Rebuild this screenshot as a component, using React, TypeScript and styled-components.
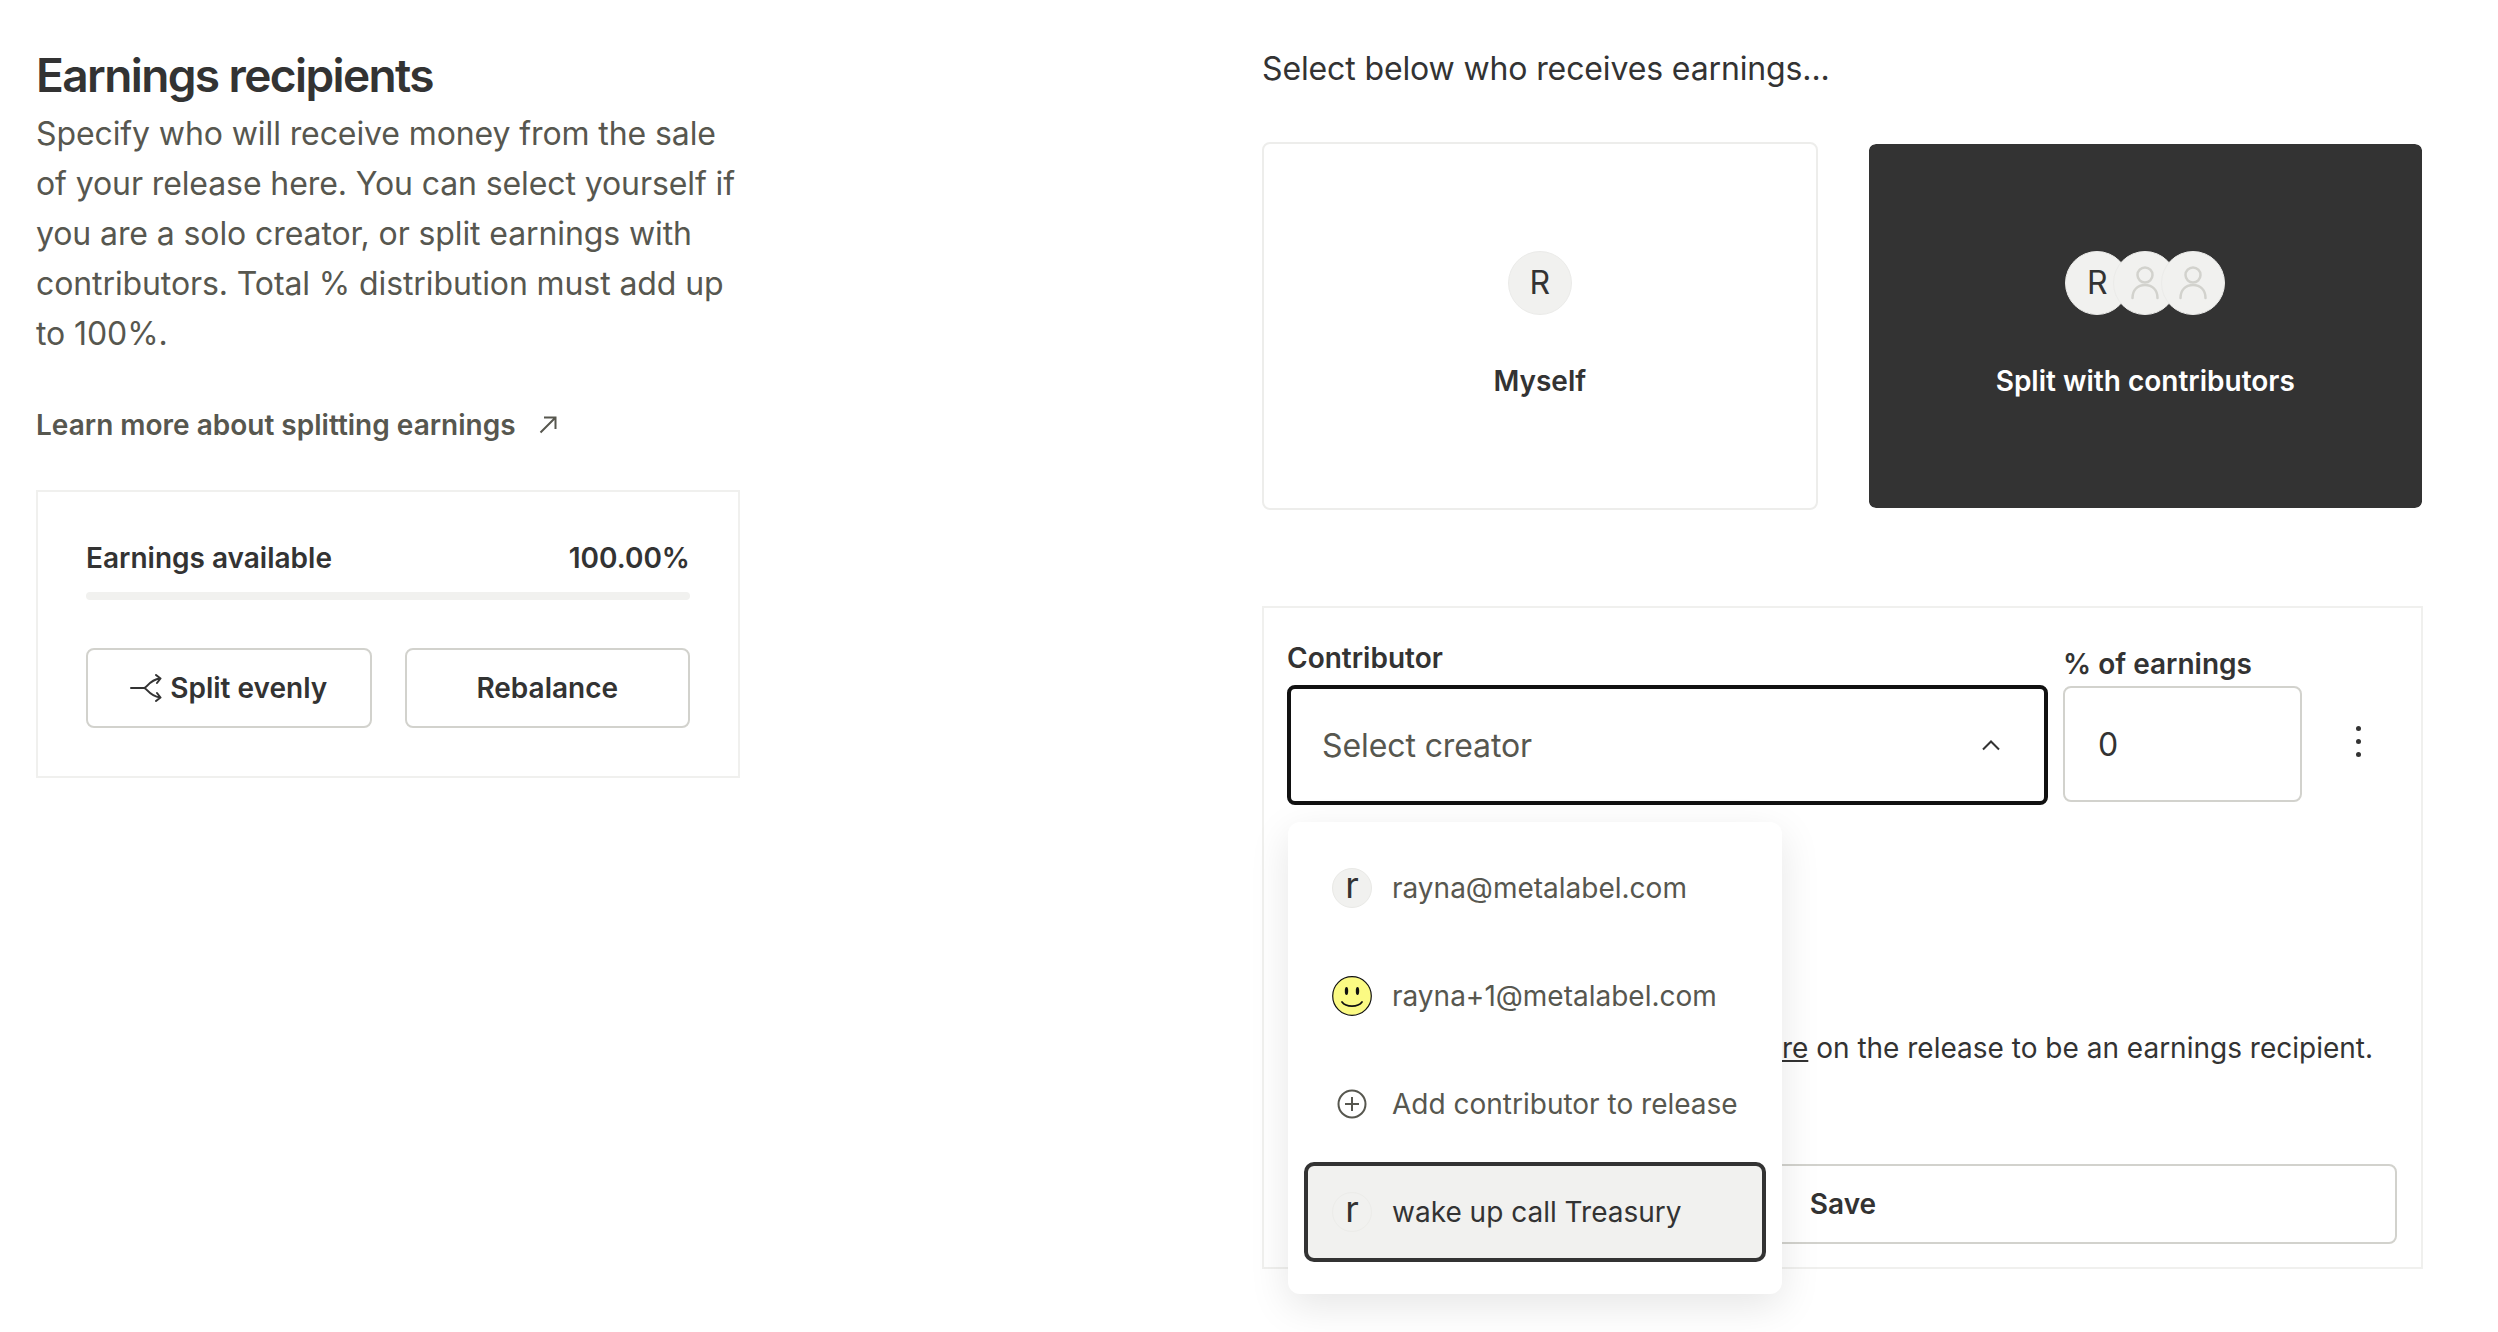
import React from 'react'
import styled, { createGlobalStyle } from 'styled-components'

const GlobalStyle = createGlobalStyle`
  html, body {
    margin: 0;
    padding: 0;
    background: #fff;
  }
  body {
    font-family: Inter, "Liberation Sans", sans-serif;
    color: #333;
  }
  * {
    box-sizing: border-box;
  }
`

const Page = styled.div`
  display: flex;
  width: 2498px;
  height: 1332px;
  overflow: hidden;
  padding-left: 36px;
`

const Intro = styled.section`
  width: 704px;
  margin-right: 522px;
  padding-top: 46px;
`

const Title = styled.h1`
  margin: 0 0 5px;
  font-size: 46px;
  line-height: 58px;
  font-weight: 600;
  letter-spacing: -1.6px;
  color: #333;
`

const Lead = styled.p`
  margin: 0;
  font-size: 32px;
  line-height: 50px;
  letter-spacing: -0.1px;
  color: #57574f;
`

const LearnLink = styled.a`
  display: flex;
  align-items: center;
  gap: 23px;
  margin-top: 44px;
  height: 44px;
  font-size: 28px;
  font-weight: 600;
  color: #57574f;
`

const SummaryCard = styled.div`
  margin-top: 43px;
  border: 2px solid #f0f0ee;
  padding: 46px 48px 48px;
`

const SummaryRow = styled.div`
  display: flex;
  justify-content: space-between;
  align-items: center;
  height: 40px;
  font-size: 28px;
  font-weight: 600;
`

const Track = styled.div`
  height: 8px;
  margin-top: 14px;
  border-radius: 4px;
  background: #f1f1ef;
`

const SummaryActions = styled.div`
  display: grid;
  grid-template-columns: 1fr 1fr;
  gap: 33px;
  margin-top: 48px;
`

const OutlineButton = styled.button`
  display: flex;
  align-items: center;
  justify-content: center;
  gap: 8px;
  width: 100%;
  height: 80px;
  border: 2px solid #d2d2cd;
  border-radius: 8px;
  background: #fff;
  font-family: inherit;
  font-size: 28px;
  font-weight: 600;
  color: #333;
  padding: 0;
`

const Editor = styled.section`
  width: 1161px;
  padding-top: 46px;
`

const Prompt = styled.p`
  margin: 0;
  font-size: 32px;
  line-height: 46px;
  letter-spacing: -0.13px;
  color: #333;
`

const Choices = styled.div`
  display: grid;
  grid-template-columns: 1fr 1fr;
  gap: 50px;
  margin-top: 50px;
`

const Choice = styled.div<{ $active?: boolean }>`
  display: flex;
  flex-direction: column;
  align-items: center;
  justify-content: center;
  gap: 46px;
  height: 368px;
  border-radius: 8px;
  border-style: solid;
  border-width: ${(p) => (p.$active ? '2px 1px' : '2px')};
  border-color: ${(p) => (p.$active ? '#fff' : '#ededeb')};
  background: ${(p) => (p.$active ? '#333' : '#fff')};
  background-clip: padding-box;
  color: ${(p) => (p.$active ? '#fff' : '#333')};
  font-size: 28px;
  line-height: 40px;
  font-weight: 600;
`

const AvatarStack = styled.div`
  display: flex;
`

const BigAvatar = styled.div`
  display: flex;
  align-items: center;
  justify-content: center;
  width: 64px;
  height: 64px;
  border-radius: 50%;
  background: #f1f1ef;
  border: 1px solid #ebebe9;
  color: #333;
  font-size: 32px;
  font-weight: 400;
  & + & {
    margin-left: -16px;
  }
`

const Panel = styled.div`
  position: relative;
  margin-top: 96px;
  height: 663px;
  border: 2px solid #f0f0ee;
  padding: 32px 24px 0 23px;
`

const FieldRow = styled.div`
  display: flex;
  align-items: flex-start;
`

const Field = styled.div<{ $width: number; $labelOffset?: number }>`
  width: ${(p) => p.$width}px;
  padding-top: ${(p) => p.$labelOffset || 0}px;
  margin-right: 15px;
`

const FieldLabel = styled.label<{ $gap: number }>`
  display: block;
  height: 36px;
  margin-bottom: ${(p) => p.$gap}px;
  font-size: 28px;
  line-height: 36px;
  font-weight: 600;
  color: #333;
`

const SelectBox = styled.div`
  display: flex;
  align-items: center;
  justify-content: space-between;
  height: 120px;
  padding: 0 43px 0 31px;
  border: 4px solid #111;
  border-radius: 8px;
  font-size: 32px;
  letter-spacing: -0.1px;
  color: #57574f;
`

const PercentInput = styled.div`
  display: flex;
  align-items: center;
  height: 116px;
  padding-left: 33px;
  border: 2px solid #d2d2cd;
  border-radius: 8px;
  font-size: 32px;
  color: #333;
`

const MenuDots = styled.div`
  display: flex;
  flex-direction: column;
  gap: 8px;
  margin: 86px 0 0 39px;
`

const Dot = styled.span`
  width: 5px;
  height: 5px;
  border-radius: 50%;
  background: #333;
`

const Hint = styled.p`
  margin: 221px 24px 0 0;
  text-align: right;
  font-size: 28px;
  line-height: 44px;
  color: #333;
  white-space: nowrap;
  a {
    color: inherit;
    text-decoration: underline;
  }
`

const SaveButton = styled(OutlineButton)`
  margin: 94px 0 0 2px;
  width: calc(100% - 2px);
`

const Dropdown = styled.ul`
  position: absolute;
  left: 24px;
  top: 214px;
  width: 494px;
  height: 472px;
  margin: 0;
  padding: 12px 16px 0;
  list-style: none;
  background: #fff;
  border-radius: 12px;
  box-shadow: 0 12px 40px rgba(0, 0, 0, 0.1);
`

const Option = styled.li<{ $selected?: boolean }>`
  display: flex;
  align-items: center;
  gap: 20px;
  height: ${(p) => (p.$selected ? '100px' : '108px')};
  margin-top: ${(p) => (p.$selected ? '4px' : '0')};
  padding-left: ${(p) => (p.$selected ? '24px' : '28px')};
  border: ${(p) => (p.$selected ? '4px solid #333' : 'none')};
  border-radius: 10px;
  background: ${(p) => (p.$selected ? '#f1f1ef' : 'transparent')};
  font-size: 28px;
  color: ${(p) => (p.$selected ? '#333' : '#57574f')};
`

const SmallAvatar = styled.span<{ $faint?: boolean }>`
  display: flex;
  align-items: center;
  justify-content: center;
  flex: none;
  width: 40px;
  height: 40px;
  border-radius: 50%;
  background: #f1f1ef;
  border: 1px solid ${(p) => (p.$faint ? '#ecece9' : '#e9e9e6')};
  padding-bottom: 6px;
  font-size: 36px;
  line-height: 36px;
  color: #333;
`

const IconSlot = styled.span`
  display: flex;
  align-items: center;
  justify-content: center;
  flex: none;
  width: 40px;
  height: 40px;
`

const SplitIcon = () => (
  <svg width="32" height="28" viewBox="0 0 32 28" fill="none" stroke="#333" strokeWidth="2" strokeLinecap="round" strokeLinejoin="round">
    <path d="M1 14h13c3 0 5-8 16-9.500M26 1l4.500 3.500L27 9" />
    <path d="M14 14c3 0 5 8 16 9.500M27 19l3.500 4.500L26 27" />
  </svg>
)

const ExternalArrow = () => (
  <svg width="18" height="18" viewBox="0 0 18 18" fill="none" stroke="#57574f" strokeWidth="2">
    <path d="M1.500 16.500L16.500 1.500M5 1.500h11.500V13" />
  </svg>
)

const ChevronUp = () => (
  <svg width="20" height="12" viewBox="0 0 20 12" fill="none" stroke="#333" strokeWidth="2">
    <path d="M2 10.500l8-8 8 8" />
  </svg>
)

const PersonIcon = () => (
  <svg width="28" height="34" viewBox="0 0 28 34" fill="none" stroke="#d2d2cd" strokeWidth="2.500" strokeLinecap="round">
    <circle cx="14" cy="9" r="7.500" />
    <path d="M1.500 32c0-8 5-13 12.500-13s12.500 5 12.500 13" />
  </svg>
)

const Smiley = () => (
  <svg width="40" height="40" viewBox="0 0 40 40">
    <circle cx="20" cy="20" r="19.300" fill="#fbfa83" stroke="#111" strokeWidth="1.200" />
    <ellipse cx="14.500" cy="15" rx="1.700" ry="4" fill="#111" />
    <ellipse cx="25.500" cy="15" rx="1.700" ry="4" fill="#111" />
    <path d="M10 26c4 5.500 16 5.500 20 0" fill="none" stroke="#111" strokeWidth="1.800" strokeLinecap="round" />
  </svg>
)

const PlusCircle = () => (
  <svg width="30" height="30" viewBox="0 0 30 30" fill="none" stroke="#57574f" strokeWidth="2">
    <circle cx="15" cy="15" r="13.500" />
    <path d="M15 8v14M8 15h14" />
  </svg>
)

const App: React.FC = () => {
  return (
    <Page>
      <GlobalStyle />
      <Intro>
        <Title>Earnings recipients</Title>
        <Lead>
          Specify who will receive money from the sale
          <br />
          of your release here. You can select yourself if
          <br />
          you are a solo creator, or split earnings with
          <br />
          contributors. Total % distribution must add up
          <br />
          to 100%.
        </Lead>
        <LearnLink>
          Learn more about splitting earnings
          <ExternalArrow />
        </LearnLink>
        <SummaryCard>
          <SummaryRow>
            <span>Earnings available</span>
            <span>100.00%</span>
          </SummaryRow>
          <Track />
          <SummaryActions>
            <OutlineButton>
              <SplitIcon />
              Split evenly
            </OutlineButton>
            <OutlineButton>Rebalance</OutlineButton>
          </SummaryActions>
        </SummaryCard>
      </Intro>
      <Editor>
        <Prompt>Select below who receives earnings...</Prompt>
        <Choices>
          <Choice>
            <AvatarStack>
              <BigAvatar>R</BigAvatar>
            </AvatarStack>
            Myself
          </Choice>
          <Choice $active>
            <AvatarStack>
              <BigAvatar>R</BigAvatar>
              <BigAvatar>
                <PersonIcon />
              </BigAvatar>
              <BigAvatar>
                <PersonIcon />
              </BigAvatar>
            </AvatarStack>
            Split with contributors
          </Choice>
        </Choices>
        <Panel>
          <FieldRow>
            <Field $width={761}>
              <FieldLabel $gap={9}>Contributor</FieldLabel>
              <SelectBox>
                Select creator
                <ChevronUp />
              </SelectBox>
            </Field>
            <Field $width={239} $labelOffset={6}>
              <FieldLabel $gap={4}>% of earnings</FieldLabel>
              <PercentInput>0</PercentInput>
            </Field>
            <MenuDots>
              <Dot />
              <Dot />
              <Dot />
            </MenuDots>
          </FieldRow>
          <Hint>
            Contributors must have a <a>share</a> on the release to be an earnings recipient.
          </Hint>
          <SaveButton>Save</SaveButton>
          <Dropdown>
            <Option>
              <SmallAvatar>r</SmallAvatar>
              rayna@metalabel.com
            </Option>
            <Option>
              <IconSlot>
                <Smiley />
              </IconSlot>
              rayna+1@metalabel.com
            </Option>
            <Option>
              <IconSlot>
                <PlusCircle />
              </IconSlot>
              Add contributor to release
            </Option>
            <Option $selected>
              <SmallAvatar $faint>r</SmallAvatar>
              wake up call Treasury
            </Option>
          </Dropdown>
        </Panel>
      </Editor>
    </Page>
  )
}

export default App
